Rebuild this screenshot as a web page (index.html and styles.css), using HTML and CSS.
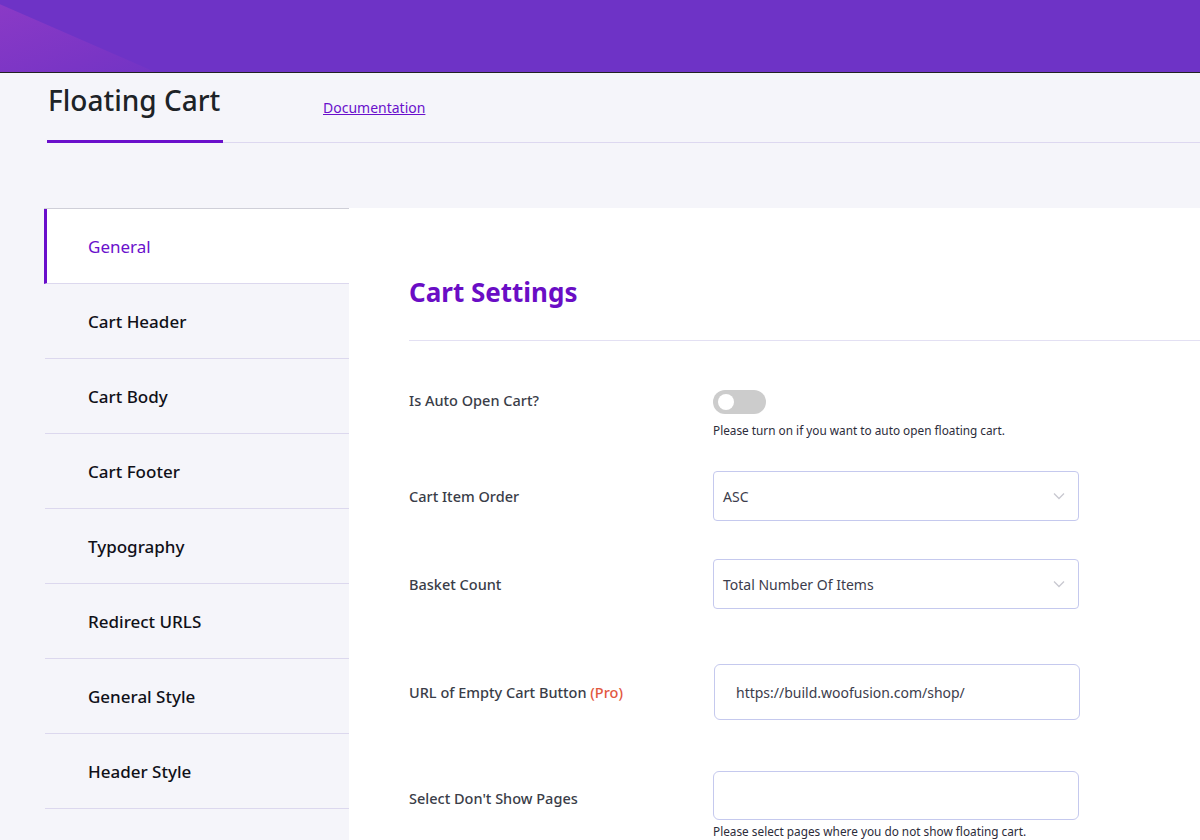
FILE: index.html
```html
<!DOCTYPE html>
<html>
<head>
<meta charset="utf-8">
<link rel="stylesheet" href="styles.css">
</head>
<body>
<div class="topbar"><div class="shine"></div></div>
<div class="pagehead">
  <h1 class="title">Floating Cart</h1>
  <a class="doclink" href="#">Documentation</a>
</div>
<div class="layout">
  <nav class="sidebar">
    <div class="navitem active">General</div>
    <div class="navitem">Cart Header</div>
    <div class="navitem">Cart Body</div>
    <div class="navitem">Cart Footer</div>
    <div class="navitem">Typography</div>
    <div class="navitem">Redirect URLS</div>
    <div class="navitem">General Style</div>
    <div class="navitem">Header Style</div>
    <div class="navitem empty"></div>
  </nav>
  <main class="content">
    <h2 class="section-title">Cart Settings</h2>
    <div class="rows">
      <div class="row row-toggle">
        <div class="label">Is Auto Open Cart?</div>
        <div class="control">
          <div class="toggle"><span class="knob"></span></div>
          <div class="help">Please turn on if you want to auto open floating cart.</div>
        </div>
      </div>
      <div class="row row-select1">
        <div class="label">Cart Item Order</div>
        <div class="control">
          <div class="select"><span>ASC</span>
            <svg class="chev" width="12" height="8" viewBox="0 0 12 8"><path d="M1 1.5l5 5 5-5" fill="none" stroke="#c8c8d0" stroke-width="1.3"/></svg>
          </div>
        </div>
      </div>
      <div class="row row-select2">
        <div class="label">Basket Count</div>
        <div class="control">
          <div class="select"><span>Total Number Of Items</span>
            <svg class="chev" width="12" height="8" viewBox="0 0 12 8"><path d="M1 1.5l5 5 5-5" fill="none" stroke="#c8c8d0" stroke-width="1.3"/></svg>
          </div>
        </div>
      </div>
      <div class="row row-input">
        <div class="label">URL of Empty Cart Button <span class="pro">(Pro)</span></div>
        <div class="control">
          <div class="input">https://build.woofusion.com/shop/</div>
        </div>
      </div>
      <div class="row row-multi">
        <div class="label">Select Don't Show Pages</div>
        <div class="control">
          <div class="multi"></div>
          <div class="help">Please select pages where you do not show floating cart.</div>
        </div>
      </div>
    </div>
  </main>
</div>
</body>
</html>
```

FILE: styles.css
```css
* { box-sizing: border-box; }
html, body { margin: 0; padding: 0; }
body {
  width: 1200px;
  height: 840px;
  overflow: hidden;
  background: #f5f5fa;
  font-family: "Noto Sans", "Open Sans", sans-serif;
  color: #1d2327;
}
.topbar {
  height: 73px;
  background: #6e33c6;
  border-bottom: 1px solid #222;
  position: relative;
  overflow: hidden;
}
.shine {
  position: absolute;
  left: 0;
  top: 0;
  width: 160px;
  height: 72px;
  background: linear-gradient(160deg, #8b3ac6 0%, #7a35c5 70%, #7234c5 100%);
  clip-path: polygon(0 6%, 97% 100%, 0 100%);
}
.pagehead {
  height: 70px;
  margin-left: 47px;
  display: flex;
  align-items: flex-start;
  border-bottom: 1px solid #ddd8f0;
}
.title {
  margin: 0;
  padding: 8px 0 0 1px;
  height: 70px;
  font-size: 28px;
  font-weight: 500;
  color: #1d2327;
  letter-spacing: 0;
  border-bottom: 3px solid #6a0fcb;
  margin-bottom: -2px;
  width: 176px;
}
.doclink {
  margin-left: 100px;
  margin-top: 25px;
  font-size: 14px;
  color: #6a10cc;
}
.layout {
  display: flex;
  margin-top: 65px;
  margin-left: 44px;
}
.sidebar {
  width: 305px;
  flex: none;
  border-top: 1px solid #cfcfd8;
}
.navitem {
  height: 75px;
  display: flex;
  align-items: center;
  padding-left: 43px;
  font-size: 17px;
  font-weight: 500;
  color: #101018;
  border-bottom: 1px solid #dcd8ee;
  margin-left: 1px;
}
.navitem.active {
  background: #fff;
  color: #6a10cc;
  border-left: 3px solid #6a0fcb;
  margin-left: 0;
  padding-left: 41px;
  font-weight: 400;
}
.content {
  flex: 1;
  background: #fff;
  min-height: 700px;
  padding-left: 60px;
}
.section-title {
  margin: 0;
  height: 133px;
  padding-top: 66px;
  font-size: 26px;
  font-weight: 700;
  color: #6a0dc5;
  border-bottom: 1px solid #e3e0f3;
}
.row {
  display: flex;
}
.label {
  width: 304px;
  flex: none;
  font-size: 14.5px;
  font-weight: 500;
  color: #3a3d48;
}
.control { width: 367px; }
.row-toggle { padding-top: 49px; }
.toggle {
  width: 53px;
  height: 24px;
  border-radius: 12px;
  background: #cccccc;
  position: relative;
}
.knob {
  position: absolute;
  left: 5px;
  top: 4px;
  width: 16px;
  height: 16px;
  border-radius: 50%;
  background: #fff;
}
.help {
  font-size: 11.8px;
  color: #2c2c3a;
  margin-top: 8px;
}
.select, .input, .multi {
  border: 1px solid #c5c9ee;
  border-radius: 4px;
  background: #fff;
  font-size: 14px;
  color: #3c3c4c;
  display: flex;
  align-items: center;
}
.select {
  width: 366px;
  height: 50px;
  padding-left: 9px;
  justify-content: space-between;
  padding-right: 13px;
}
.row-select1 { padding-top: 33px; align-items: center; }
.row-select2 { padding-top: 38px; align-items: center; }
.row-input { padding-top: 55px; align-items: center; }
.row-input .control { padding-left: 1px; }
.input {
  width: 366px;
  height: 56px;
  padding-left: 21px;
  border-radius: 6px;
}
.pro { color: #e2583e; }
.row-multi { padding-top: 51px; }
.row-multi .label { padding-top: 17px; }
.multi {
  width: 366px;
  height: 49px;
  border-radius: 6px;
}
.row-multi .help { margin-top: 3px; }
```
